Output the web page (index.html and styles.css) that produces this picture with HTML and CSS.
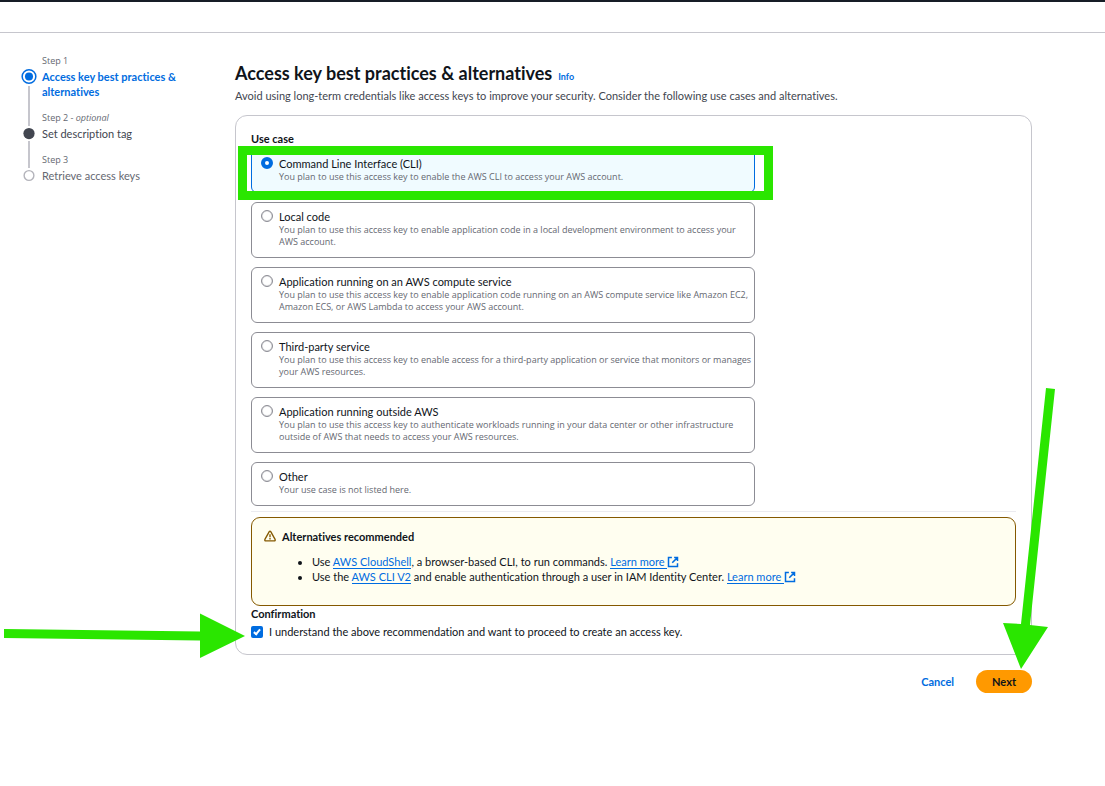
FILE: index.html
```
<!DOCTYPE html>
<html lang="en">
<head>
<meta charset="utf-8">
<title>Access key best practices &amp; alternatives</title>
<link rel="stylesheet" href="styles.css">
</head>
<body>
<header class="topbar"></header>
<div class="layout">
  <nav class="steps" aria-label="Steps">
    <ol class="step-list">
      <li class="step step-active">
        <div class="step-number">Step 1</div>
        <svg class="step-icon" viewBox="0 0 16 16"><circle cx="8" cy="8" r="7.300" fill="#fff" stroke="#006ce0" stroke-width="1.6"/><circle cx="8" cy="8" r="4.3" fill="#006ce0"/></svg>
        <div class="step-title">Access key best practices &amp; alternatives</div>
      </li>
      <li class="step">
        <div class="step-number">Step 2 - <i>optional</i></div>
        <svg class="step-icon" viewBox="0 0 16 16"><circle cx="8" cy="8" r="6" fill="#424650"/></svg>
        <div class="step-title">Set description tag</div>
      </li>
      <li class="step step-disabled">
        <div class="step-number">Step 3</div>
        <svg class="step-icon" viewBox="0 0 16 16"><circle cx="8" cy="8" r="5.200" fill="#fff" stroke="#b4b4bb" stroke-width="1.5"/></svg>
        <div class="step-title">Retrieve access keys</div>
      </li>
    </ol>
  </nav>
  <main class="content">
    <div class="heading">
      <h1 class="title">Access key best practices &amp; alternatives</h1>
      <a class="info" href="#">Info</a>
    </div>
    <p class="intro">Avoid using long-term credentials like access keys to improve your security. Consider the following use cases and alternatives.</p>
    <form class="form">
      <section class="panel">
        <h2 class="label" id="use-case">Use case</h2>
        <div class="choices" role="radiogroup" aria-labelledby="use-case">
          <label class="choice choice-selected">
            <input class="radio" type="radio" name="use" checked>
            <span class="choice-text"><span class="choice-name">Command Line Interface (CLI)</span><span class="choice-note">You plan to use this access key to enable the AWS CLI to access your AWS account.</span></span>
            <span class="highlight"></span>
          </label>
          <label class="choice">
            <input class="radio" type="radio" name="use">
            <span class="choice-text"><span class="choice-name">Local code</span><span class="choice-note">You plan to use this access key to enable application code in a local development environment to access your AWS account.</span></span>
          </label>
          <label class="choice">
            <input class="radio" type="radio" name="use">
            <span class="choice-text"><span class="choice-name">Application running on an AWS compute service</span><span class="choice-note">You plan to use this access key to enable application code running on an AWS compute service like Amazon EC2, Amazon ECS, or AWS Lambda to access your AWS account.</span></span>
          </label>
          <label class="choice">
            <input class="radio" type="radio" name="use">
            <span class="choice-text"><span class="choice-name">Third-party service</span><span class="choice-note">You plan to use this access key to enable access for a third-party application or service that monitors or manages your AWS resources.</span></span>
          </label>
          <label class="choice">
            <input class="radio" type="radio" name="use">
            <span class="choice-text"><span class="choice-name">Application running outside AWS</span><span class="choice-note">You plan to use this access key to authenticate workloads running in your data center or other infrastructure outside of AWS that needs to access your AWS resources.</span></span>
          </label>
          <label class="choice">
            <input class="radio" type="radio" name="use">
            <span class="choice-text"><span class="choice-name">Other</span><span class="choice-note">Your use case is not listed here.</span></span>
          </label>
        </div>
        <hr class="divider">
        <div class="alert">
          <svg class="alert-icon" viewBox="0 0 16 16" fill="none" stroke="#855900" stroke-width="1.8" stroke-linejoin="round"><path d="M7 2.200Q8 .8 9 2.200L14.800 12.600Q15.300 14.500 13.600 14.500H2.400Q.7 14.500 1.200 12.600Z"/><path d="M8 5.500v4M8 10.800v1.700"/></svg>
          <div class="alert-body">
            <h3 class="label">Alternatives recommended</h3>
            <ul class="tips">
              <li>Use <a class="link" href="#">AWS CloudShell</a>, a browser-based CLI, to run commands. <a class="link" href="#">Learn more&nbsp;</a><svg class="external" viewBox="0 0 16 16"><path d="M6.500 2H2v12h12V9.500M9.500 2H14v4.500M13.500 2.500 7 9"/></svg></li>
              <li>Use the <a class="link" href="#">AWS CLI V2</a> and enable authentication through a user in IAM Identity Center. <a class="link" href="#">Learn more&nbsp;</a><svg class="external" viewBox="0 0 16 16"><path d="M6.500 2H2v12h12V9.500M9.500 2H14v4.500M13.500 2.500 7 9"/></svg></li>
            </ul>
          </div>
        </div>
        <h2 class="label">Confirmation</h2>
        <label class="confirm">
          <input class="checkbox" type="checkbox" checked>
          <span>I understand the above recommendation and want to proceed to create an access key.</span>
          <svg class="arrow-confirm" viewBox="0 0 241 46"><path d="M0 16 196 18.500V0.500L241 23 196 45V27.500L0 25Z"/></svg>
        </label>
      </section>
      <div class="actions">
        <button class="button" type="button">Cancel</button>
        <div class="next-wrap">
          <button class="button button-primary" type="button">Next</button>
          <svg class="arrow-next" viewBox="0 0 46 282"><path d="M43 0 52 1 27 237 45 239 18 281 0 235 18 236Z"/></svg>
        </div>
      </div>
    </form>
  </main>
</div>
</body>
</html>
```
FILE: styles.css
```
* { box-sizing: border-box; }
body {
  margin: 0;
  background: #fff;
  color: #0f141a;
  font: 11px/15px Lato, "Noto Sans", sans-serif;
  font-variant-ligatures: none;
}
h1, h2, h3, p, ol, ul { margin: 0; padding: 0; }
a { color: #006ce0; text-decoration: none; }

.topbar { height: 33px; border-top: 2px solid #161d26; border-bottom: 1px solid #c6c6cd; }
.layout { display: flex; padding: 22px 73px 40px 21px; }

.steps { flex: 0 0 214px; }
.step-list { list-style: none; display: flex; flex-direction: column; gap: 13px; }
.step {
  position: relative;
  display: grid;
  grid-template-columns: 16px 140px;
  column-gap: 5px;
  row-gap: 2px;
  color: #424650;
}
.step-number { grid-column: 2; font-family: "Open Sans", sans-serif; font-size: 9px; line-height: 12px; color: #656871; }
.step-icon { width: 16px; height: 15px; overflow: visible; }
.step-active .step-title { color: #006ce0; font-weight: 700; }
.step-disabled { color: #656871; }
.step:not(:last-child)::after {
  content: "";
  position: absolute;
  left: 7px;
  top: 31px;
  bottom: -27px;
  width: 2px;
  background: #c6c6cd;
}
.step:nth-child(2)::after { top: 29px; }

.content { flex: 1; min-width: 0; padding-top: 6px; }
.heading { display: flex; align-items: baseline; gap: 6px; line-height: 24px; }
.title { font-size: 18px; }
.info { font-size: 9px; line-height: 12px; font-weight: 700; }
.intro { margin-top: 3px; color: #424650; }

.panel {
  margin-top: 12px;
  padding: 15px;
  border: 1px solid #c6c6cd;
  border-radius: 12px;
}
.label { font-size: 11px; line-height: 15px; font-weight: 700; }
.choices { display: grid; gap: 9px; width: calc((100% - 9px) * 2 / 3); margin-top: 3px; }
.choice {
  position: relative;
  display: flex;
  gap: 6px;
  padding: 6px 0 9px 9px;
  border: 1px solid #8c8c94;
  border-radius: 6px;
}
.choice-selected { background: #f0fbff; border-color: #006ce0; }
.choice-text { flex: 1; }
.choice-name, .choice-note { display: block; }
.choice-note { font-family: "Open Sans", sans-serif; font-size: 9px; line-height: 12px; color: #656871; }
.radio {
  appearance: none;
  flex: none;
  width: 12px;
  height: 12px;
  margin: 1px 0;
  border: 1px solid #8c8c94;
  border-radius: 50%;
  background: #fff;
  box-shadow: inset 0 0 1px #656871;
}
.radio:checked { border: 4px solid #006ce0; box-shadow: none; }
.highlight { position: absolute; inset: -4px -19px -8px -14px; border: 9px solid #2ae600; z-index: 1; pointer-events: none; }

.divider { margin: 5px 0; border: 0; border-top: 1px solid #ebebf0; }
.alert {
  display: flex;
  gap: 6px;
  padding: 11px 12px 21px;
  background: #fffef0;
  border: 1px solid #855900;
  border-radius: 9px;
}
.alert-icon { width: 12px; height: 12px; margin-top: 1px; }
.tips { margin-top: 10px; padding-left: 30px; }
.link { border-bottom: 1px solid #006ce0; }
.external { width: 12px; height: 12px; vertical-align: -2px; fill: none; stroke: #006ce0; stroke-width: 2; }

.confirm { position: relative; display: flex; align-items: center; gap: 6px; margin-top: 3px; }
.checkbox {
  appearance: none;
  position: relative;
  width: 12px;
  height: 12px;
  margin: 0;
  border-radius: 2px;
  background: #006ce0;
}
.checkbox::after {
  content: "";
  position: absolute;
  left: 4px;
  top: 2px;
  width: 2px;
  height: 5px;
  border: solid #fff;
  border-width: 0 2px 2px 0;
  transform: rotate(40deg);
}
.arrow-confirm { position: absolute; left: -247px; top: -11px; width: 241px; height: 46px; fill: #2ae600; pointer-events: none; }

.actions { display: flex; justify-content: flex-end; gap: 6px; margin-top: 15px; }
.button {
  height: 23px;
  padding: 0 16px;
  border: 0;
  border-radius: 12px;
  background: none;
  color: #006ce0;
  font: inherit;
  font-weight: 700;
}
.button-primary { background: #ff9900; color: #0f141a; }
.next-wrap { position: relative; }
.arrow-next { position: absolute; right: -17px; bottom: 100%; width: 46px; height: 282px; overflow: visible; fill: #2ae600; pointer-events: none; }
```
